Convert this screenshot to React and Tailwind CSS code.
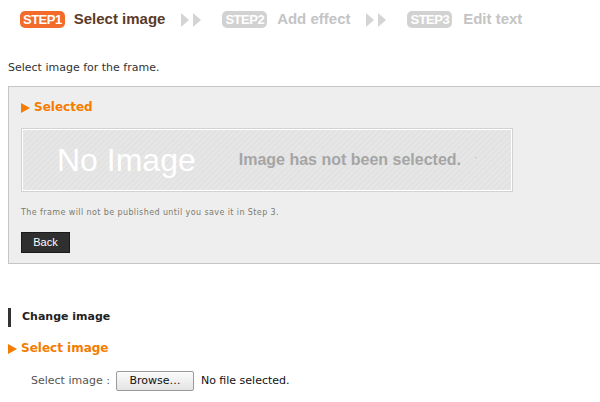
import React from "react";

const Badge = ({ n, active }) => (
  <span
    className={`inline-flex items-center h-[17px] px-[3px] rounded-[5px] text-[13px] font-bold leading-none tracking-[-0.5px] text-white ${
      active ? "bg-[#f26b2a]" : "bg-[#d2d2d2]"
    }`}
  >
    STEP{n}
  </span>
);

const Arrows = () => (
  <svg width="22" height="14" viewBox="0 0 22 14" className="ml-[16px] mr-[19px]">
    <path d="M0 0 L8 7 L0 14 Z" fill="#d4d4d4" />
    <path d="M12 0 L20 7 L12 14 Z" fill="#d4d4d4" />
  </svg>
);

const Tri = () => (
  <svg width="9" height="10" viewBox="0 0 9 10" className="mr-[4px] mt-[2px]">
    <path d="M0 0 L9 5 L0 10 Z" fill="#f57c00" />
  </svg>
);

export default function App() {
  return (
    <div className="w-[600px] h-[402px] overflow-hidden bg-white font-['DejaVu_Sans',sans-serif]">
      {/* Steps */}
      <div className="flex items-center pl-[20px] pt-[11px] h-[28px] font-['Liberation_Sans',sans-serif]">
        <Badge n="1" active />
        <span className="ml-[9px] text-[15px] font-bold text-[#5b3b2a]">Select image</span>
        <Arrows />
        <Badge n="2" />
        <span className="ml-[10px] text-[15px] font-bold text-[#c4c4c4]">Add effect</span>
        <Arrows />
        <Badge n="3" />
        <span className="ml-[11px] text-[15px] font-bold text-[#c4c4c4]">Edit text</span>
      </div>

      <p className="mt-[33px] ml-[8px] text-[11px] text-[#333] leading-[14px]">Select image for the frame.</p>

      {/* Selected box */}
      <div className="mt-[11px] ml-[8px] w-[620px] h-[178px] border border-[#c6c6c6] bg-[#eeeeee] px-[12px] pt-[12px]">
        <div className="flex items-center text-[12px] font-bold text-[#f57c00] leading-[16px]">
          <Tri />
          Selected
        </div>
        <div className="mt-[13px] w-[492px] h-[64px] border border-[#d2d2d2] p-px bg-white">
          <div className="flex items-center h-full bg-[repeating-linear-gradient(135deg,#e2e2e2_0px,#e2e2e2_2px,#e6e6e6_2px,#e6e6e6_4px)] font-['Liberation_Sans',sans-serif]">
            <span className="ml-[34px] text-[32px] text-white leading-none">No Image</span>
            <span className="ml-[43px] text-[16px] font-bold text-[#a5a5a5]">Image has not been selected.</span>
            <span className="ml-[14px] text-[7px] text-[#a5a5a5]">'</span>
          </div>
        </div>
        <p className="mt-[15px] text-[8px] text-[#7b7b6c] tracking-[0.4px] leading-[12px]">
          The frame will not be published until you save it in Step 3.
        </p>
        <button className="mt-[13px] w-[49px] h-[21px] bg-[#2f2f2f] border border-[#1a1a1a] text-white text-[11px] font-['Liberation_Sans',sans-serif]">
          Back
        </button>
      </div>

      {/* Change image */}
      <div className="mt-[44px] ml-[8px] flex items-center h-[19px] border-l-[3px] border-[#333]">
        <span className="ml-[11px] text-[11px] font-bold text-[#222]">Change image</span>
      </div>

      <div className="mt-[13px] ml-[8px] flex items-center text-[12px] font-bold text-[#f57c00] leading-[16px]">
        <Tri />
        Select image
      </div>

      <div className="mt-[15px] ml-[31px] flex items-center text-[11px]">
        <span className="text-[#555]">Select image :</span>
        <button className="ml-[6px] w-[78px] h-[20px] border border-[#9a9a9a] rounded-[2px] bg-[linear-gradient(#fbfbfb,#e4e4e4)] text-[#111] text-[11px]">
          Browse…
        </button>
        <span className="ml-[7px] text-[#111]">No file selected.</span>
      </div>
    </div>
  );
}
